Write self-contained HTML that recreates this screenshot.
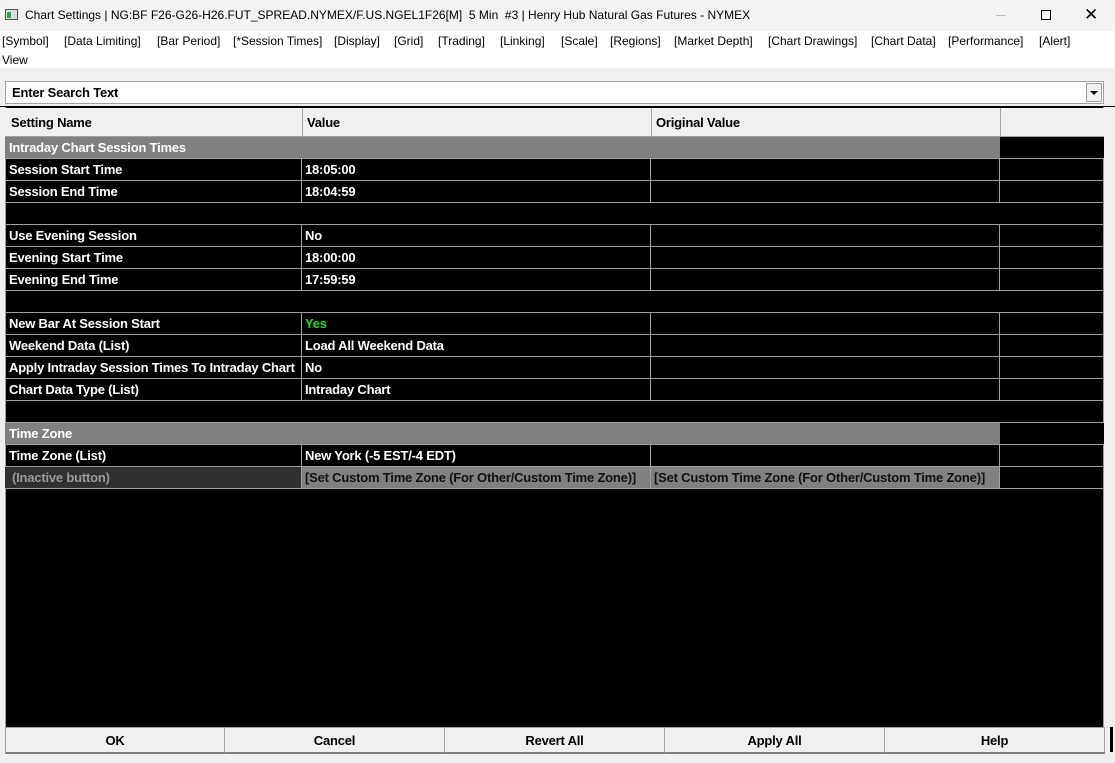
<!DOCTYPE html>
<html><head><meta charset="utf-8"><style>
*{margin:0;padding:0;box-sizing:border-box}
body{width:1115px;height:763px;background:#f0f0f0;position:relative;overflow:hidden;font-family:"Liberation Sans",sans-serif}
.a{position:absolute}
.t{font-size:12px;color:#000;white-space:nowrap}
.m{position:absolute;top:34px;font-size:12px;color:#000;white-space:nowrap}
.c{position:absolute;height:22px;line-height:21px;font-weight:bold;font-size:13px;letter-spacing:-0.2px;color:#fff;padding-left:4px;white-space:nowrap;overflow:hidden;border-bottom:1px solid #a0a0a0}
.btn{position:absolute;top:727px;height:27px;background:#f0f0f0;border:1px solid #a0a0a0;border-bottom:2px solid #808080;text-align:center;line-height:26px;font-weight:bold;font-size:13px;letter-spacing:-0.2px}
</style></head><body>
<div class="a" style="left:0;top:0;width:1115px;height:31px;background:#f3f3f3"></div>
<div class="a" style="left:5px;top:9px;width:13px;height:11px;border:1px solid #555;background:#ddd"><div class="a" style="left:1px;top:2px;width:4px;height:6px;background:#2a5"></div></div>
<div class="a t" style="left:25px;top:8px;font-size:12px">Chart Settings | NG:BF F26-G26-H26.FUT_SPREAD.NYMEX/F.US.NGEL1F26[M]&nbsp; 5 Min&nbsp; #3 | Henry Hub Natural Gas Futures - NYMEX</div>
<div class="a" style="left:996px;top:15px;width:10px;height:1px;background:#bbb"></div>
<div class="a" style="left:1041px;top:10px;width:10px;height:10px;border:1px solid #000"></div>
<div class="a t" style="left:1084px;top:5px;font-size:17px">✕</div>
<div class="a" style="left:0;top:31px;width:1115px;height:37px;background:#fff"></div>
<div class="m" style="left:2px">[Symbol]</div>
<div class="m" style="left:64px">[Data Limiting]</div>
<div class="m" style="left:157px">[Bar Period]</div>
<div class="m" style="left:233px">[*Session Times]</div>
<div class="m" style="left:334px">[Display]</div>
<div class="m" style="left:394px">[Grid]</div>
<div class="m" style="left:438px">[Trading]</div>
<div class="m" style="left:500px">[Linking]</div>
<div class="m" style="left:561px">[Scale]</div>
<div class="m" style="left:610px">[Regions]</div>
<div class="m" style="left:674px">[Market Depth]</div>
<div class="m" style="left:768px">[Chart Drawings]</div>
<div class="m" style="left:871px">[Chart Data]</div>
<div class="m" style="left:948px">[Performance]</div>
<div class="m" style="left:1039px">[Alert]</div>
<div class="a t" style="left:2px;top:53px">View</div>
<div class="a" style="left:5px;top:81px;width:1099px;height:23px;background:#fff;border:1px solid #a0a0a0"></div>
<div class="a t" style="left:12px;top:85px;font-weight:bold;font-size:13px;letter-spacing:-0.2px">Enter Search Text</div>
<div class="a" style="left:1086px;top:83px;width:16px;height:19px;background:#f0f0f0;border:1px solid #a0a0a0"><div class="a" style="left:3px;top:7px;border-left:4px solid transparent;border-right:4px solid transparent;border-top:4px solid #000"></div></div>
<div class="a" style="left:0;top:106px;width:1115px;height:1px;background:#000"></div>
<div class="a" style="left:5px;top:107px;width:1099px;height:620px;background:#000;border-left:1px solid #a0a0a0;border-right:1px solid #a0a0a0"></div>
<div class="a" style="left:5px;top:108px;width:1099px;height:29px;background:#f0f0f0;border-bottom:1px solid #a0a0a0"></div>
<div class="a" style="left:302px;top:108px;width:1px;height:28px;background:#a0a0a0"></div>
<div class="a" style="left:651px;top:108px;width:1px;height:28px;background:#a0a0a0"></div>
<div class="a" style="left:1000px;top:108px;width:1px;height:28px;background:#a0a0a0"></div>
<div class="a t" style="left:11px;top:115px;font-weight:bold;font-size:13px;letter-spacing:-0.2px">Setting Name</div>
<div class="a t" style="left:307px;top:115px;font-weight:bold;font-size:13px;letter-spacing:-0.2px">Value</div>
<div class="a t" style="left:656px;top:115px;font-weight:bold;font-size:13px;letter-spacing:-0.2px">Original Value</div>

<div class="c" style="left:5px;top:137px;width:995px;background:#808080">Intraday Chart Session Times</div>
<div class="c" style="left:1000px;top:137px;width:104px;background:#000"></div>
<div class="c" style="left:5px;top:423px;width:995px;background:#808080">Time Zone</div>
<div class="c" style="left:1000px;top:423px;width:104px;background:#000"></div>
<div class="c" style="left:5px;top:203px;width:1099px"></div>
<div class="c" style="left:5px;top:291px;width:1099px"></div>
<div class="c" style="left:5px;top:401px;width:1099px"></div>

<div id="rows"></div>
<script>
var r=[[159,"Session Start Time","18:05:00"],[181,"Session End Time","18:04:59"],[225,"Use Evening Session","No"],[247,"Evening Start Time","18:00:00"],[269,"Evening End Time","17:59:59"],[313,"New Bar At Session Start","Yes",1],[335,"Weekend Data (List)","Load All Weekend Data"],[357,"Apply Intraday Session Times To Intraday Chart","No"],[379,"Chart Data Type (List)","Intraday Chart"],[445,"Time Zone (List)","New York (-5 EST/-4 EDT)"]];
var h="";
r.forEach(function(x){
h+='<div class="c" style="left:5px;top:'+x[0]+'px;width:297px;border-right:1px solid #a0a0a0">'+x[1]+'</div>';
h+='<div class="c" style="left:302px;top:'+x[0]+'px;width:349px;padding-left:3px;border-right:1px solid #a0a0a0;'+(x[3]?'color:#22dd22':'')+'">'+x[2]+'</div>';
h+='<div class="c" style="left:651px;top:'+x[0]+'px;width:349px;border-right:1px solid #a0a0a0"></div>';
h+='<div class="c" style="left:1000px;top:'+x[0]+'px;width:104px"></div>';
});
h+='<div class="c" style="left:5px;top:467px;width:297px;border-right:1px solid #a0a0a0;background:#303030;color:#9a9a9a;padding-left:7px">(Inactive button)</div>';
h+='<div class="c" style="left:302px;top:467px;width:349px;border-right:1px solid #a0a0a0;background:#808080;color:#111;padding-left:3px">[Set Custom Time Zone (For Other/Custom Time Zone)]</div>';
h+='<div class="c" style="left:651px;top:467px;width:349px;border-right:1px solid #a0a0a0;background:#808080;color:#111;padding-left:3px">[Set Custom Time Zone (For Other/Custom Time Zone)]</div>';
h+='<div class="c" style="left:1000px;top:467px;width:104px"></div>';
document.getElementById("rows").innerHTML=h;
</script>

<div class="btn" style="left:5px;width:220px">OK</div>
<div class="btn" style="left:224px;width:221px">Cancel</div>
<div class="btn" style="left:444px;width:221px">Revert All</div>
<div class="btn" style="left:664px;width:221px">Apply All</div>
<div class="btn" style="left:884px;width:221px">Help</div>
<div class="a" style="left:1110px;top:727px;width:3px;height:25px;background:#000"></div>
</body></html>
